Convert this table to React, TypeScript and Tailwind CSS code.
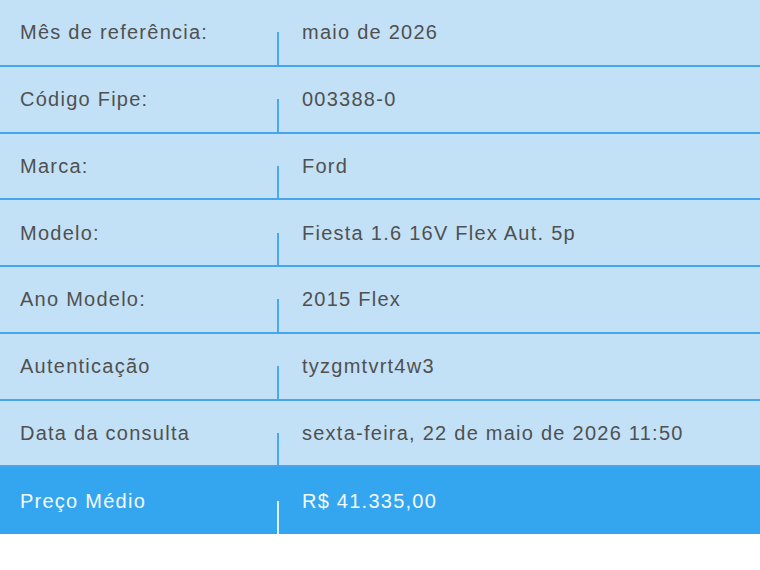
import React from "react";

const rows: [string, string][] = [
  ["Mês de referência:", "maio de 2026"],
  ["Código Fipe:", "003388-0"],
  ["Marca:", "Ford"],
  ["Modelo:", "Fiesta 1.6 16V Flex Aut. 5p"],
  ["Ano Modelo:", "2015 Flex"],
  ["Autenticação", "tyzgmtvrt4w3"],
  ["Data da consulta", "sexta-feira, 22 de maio de 2026 11:50"],
];

function Row({ label, value, highlight }: { label: string; value: string; highlight?: boolean }) {
  return (
    <div
      className={
        highlight
          ? "flex h-[67px] bg-[#33a6ef] text-[#f4faff]"
          : "flex h-[66.75px] bg-[#c3e1f6] text-[#505050] border-b-2 border-[#45a6ed]"
      }
    >
      <div className="w-[277px] flex items-center pl-[20px]">{label}</div>
      <div className="w-[2px] flex flex-col">
        <div className="flex-1" />
        <div className={highlight ? "flex-1 bg-[#dff1ff]" : "flex-1 bg-[#4aa9ee]"} />
      </div>
      <div className="flex-1 flex items-center pl-[23px]">{value}</div>
    </div>
  );
}

export default function App() {
  return (
    <div
      className="w-[760px] h-[570px] bg-white"
      style={{ fontFamily: '"Liberation Sans", Arial, sans-serif' }}
    >
      <div className="flex flex-col text-[20px] tracking-[1.25px] leading-none">
        {rows.map(([l, v]) => (
          <Row key={l} label={l} value={v} />
        ))}
        <Row label="Preço Médio" value="R$ 41.335,00" highlight />
      </div>
    </div>
  );
}
